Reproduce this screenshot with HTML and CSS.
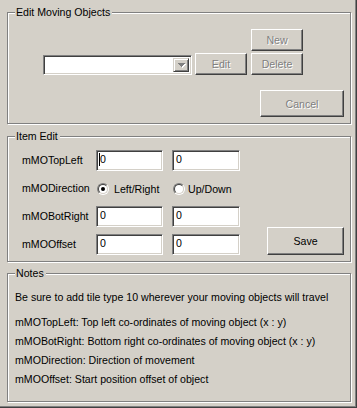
FILE: index.html
```html
<!DOCTYPE html>
<html lang="en">
<head>
  <meta charset="UTF-8" />
  <title>Moving Objects</title>
  <link rel="stylesheet" href="styles.css">
</head>
<body>
  <div class="window">

    <div class="group g-objects">
      <span class="legend">Edit Moving Objects</span>
      <div class="row row-new">
        <button class="btn disabled">New</button>
      </div>
      <div class="row row-select">
        <div class="combo">
          <span class="combo-btn">
            <svg class="arrow" width="8" height="5" viewBox="0 0 8 5">
              <path d="M1 1h7v1h-1v1h-1v1h-1v1h-1v-1h-1v-1h-1v-1h-1z" fill="#fff"/>
              <path d="M0 0h7v1h-1v1h-1v1h-1v1h-1v-1h-1v-1h-1v-1h-1z" fill="#808080"/>
            </svg>
          </span>
        </div>
        <button class="btn disabled">Edit</button>
        <button class="btn disabled">Delete</button>
      </div>
      <div class="row row-cancel">
        <button class="btn btn-cancel disabled">Cancel</button>
      </div>
    </div>

    <div class="group g-item">
      <span class="legend">Item Edit</span>
      <div class="item-row">
        <span class="item-label">mMOTopLeft</span>
        <div class="edit"><span class="caret"></span>0</div>
        <div class="edit">0</div>
      </div>
      <div class="item-row radio-row">
        <span class="item-label">mMODirection</span>
        <label class="option option-first"><span class="radio checked"></span>Left/Right</label>
        <label class="option option-second"><span class="radio"></span>Up/Down</label>
      </div>
      <div class="item-row">
        <span class="item-label">mMOBotRight</span>
        <div class="edit">0</div>
        <div class="edit">0</div>
      </div>
      <div class="item-row row-offset">
        <span class="item-label">mMOOffset</span>
        <div class="edit">0</div>
        <div class="edit">0</div>
        <button class="btn btn-save">Save</button>
      </div>
    </div>

    <div class="group g-notes">
      <span class="legend">Notes</span>
      <p class="first">Be sure to add tile type 10 wherever your moving objects will travel</p>
      <p>mMOTopLeft: Top left co-ordinates of moving object (x : y)</p>
      <p>mMOBotRight: Bottom right co-ordinates of moving object (x : y)</p>
      <p>mMODirection: Direction of movement</p>
      <p>mMOOffset: Start position offset of object</p>
    </div>

  </div>
</body>
</html>
```

FILE: styles.css
```css
body {
  margin: 0;
  background: #d4d0c8;
  font-family: "Liberation Sans", Arial, sans-serif;
  font-size: 10.6px;
  color: #000;
}
.window {
  box-sizing: border-box;
  width: 357px;
  height: 408px;
  padding: 12px 0 0 7px;
  border-right: 1px solid #404040;
  border-bottom: 1px solid #404040;
  box-shadow: inset -1px -1px #808080;
}

/* etched group boxes */
.group {
  position: relative;
  box-sizing: border-box;
  width: 344px;
  border: 1px solid #808080;
  box-shadow: inset 1px 1px #fff, 1px 1px #fff;
}
.legend {
  position: absolute;
  top: -7px;
  left: 7px;
  padding: 0 2px 0 1px;
  line-height: 13px;
  background: #d4d0c8;
}

/* buttons */
.btn {
  box-sizing: border-box;
  width: 52px;
  height: 22px;
  margin: 0;
  padding: 0;
  font: 10.6px "Liberation Sans", Arial, sans-serif;
  color: #000;
  background: #d4d0c8;
  border: 1px solid;
  border-color: #fff #404040 #404040 #fff;
  box-shadow: inset -1px -1px #808080, inset 1px 1px #d4d0c8;
}
.btn.disabled {
  color: #808080;
  text-shadow: 1px 1px 0 #fff;
}
.btn + .btn {
  margin-left: 4px;
}
.btn-cancel {
  width: 84px;
  height: 27px;
}
.btn-save {
  width: 77px;
  height: 28px;
}
.row-offset .btn-save {
  margin-left: 27px;
}

/* first group */
.g-objects {
  height: 112px;
  padding-top: 16px;
}
.row {
  display: flex;
  align-items: flex-start;
}
.row-new {
  padding-left: 243px;
}
.row-select {
  padding-left: 35px;
  margin-top: 2px;
}
.row-cancel {
  padding-left: 252px;
  margin-top: 15px;
}
.combo {
  box-sizing: border-box;
  display: flex;
  justify-content: flex-end;
  width: 149px;
  height: 20px;
  margin: 2px 3px 0 0;
  padding: 2px;
  background: #fff;
  border: 1px solid;
  border-color: #808080 #fff #fff #808080;
  box-shadow: inset 1px 1px #404040, inset -1px -1px #d4d0c8;
}
.combo-btn {
  box-sizing: border-box;
  display: flex;
  align-items: center;
  justify-content: center;
  width: 16px;
  background: #d4d0c8;
  border: 1px solid;
  border-color: #d4d0c8 #404040 #404040 #d4d0c8;
  box-shadow: inset 1px 1px #fff, inset -1px -1px #808080;
}
.arrow {
  display: block;
  margin: 1px 0 0 1px;
}

/* item edit group */
.g-item {
  height: 126px;
  margin-top: 12px;
  padding: 13px 0 0 14px;
}
.item-row {
  display: flex;
  align-items: center;
  height: 21px;
}
.item-label {
  width: 74px;
  line-height: 21px;
}
.edit {
  position: relative;
  box-sizing: border-box;
  width: 67px;
  height: 21px;
  padding-left: 3px;
  line-height: 17px;
  background: #fff;
  border: 1px solid;
  border-color: #808080 #fff #fff #808080;
  box-shadow: inset 1px 1px #404040, inset -1px -1px #d4d0c8;
}
.edit + .edit {
  width: 68px;
  margin-left: 9px;
}
.caret {
  position: absolute;
  left: 2px;
  top: 2px;
  width: 1px;
  height: 13px;
  background: #000;
}
.radio-row {
  height: 35px;
}
.option {
  display: flex;
  align-items: center;
}
.option-first {
  width: 76px;
}
.option-first .radio {
  margin: 0 5px 0 1px;
}
.option-second .radio {
  margin: 0 3px 0 1px;
}
.radio {
  position: relative;
  box-sizing: border-box;
  width: 12px;
  height: 12px;
  border-radius: 50%;
  border: 1px solid;
  border-color: #808080 #fff #fff #808080;
}
.radio::before {
  content: "";
  position: absolute;
  inset: 0;
  border-radius: 50%;
  background: #fff;
  border: 1px solid;
  border-color: #404040 #d4d0c8 #d4d0c8 #404040;
}
.radio.checked::after {
  content: "";
  position: absolute;
  left: 3px;
  top: 3px;
  width: 4px;
  height: 4px;
  border-radius: 50%;
  background: #000;
}
.row-offset {
  height: 28px;
  align-items: flex-end;
}

/* notes group */
.g-notes {
  height: 129px;
  margin-top: 11px;
  padding: 14px 0 0 7px;
}
.g-notes p {
  margin: 0;
  line-height: 19px;
  white-space: nowrap;
}
.g-notes .first {
  margin-bottom: 6px;
}
```
